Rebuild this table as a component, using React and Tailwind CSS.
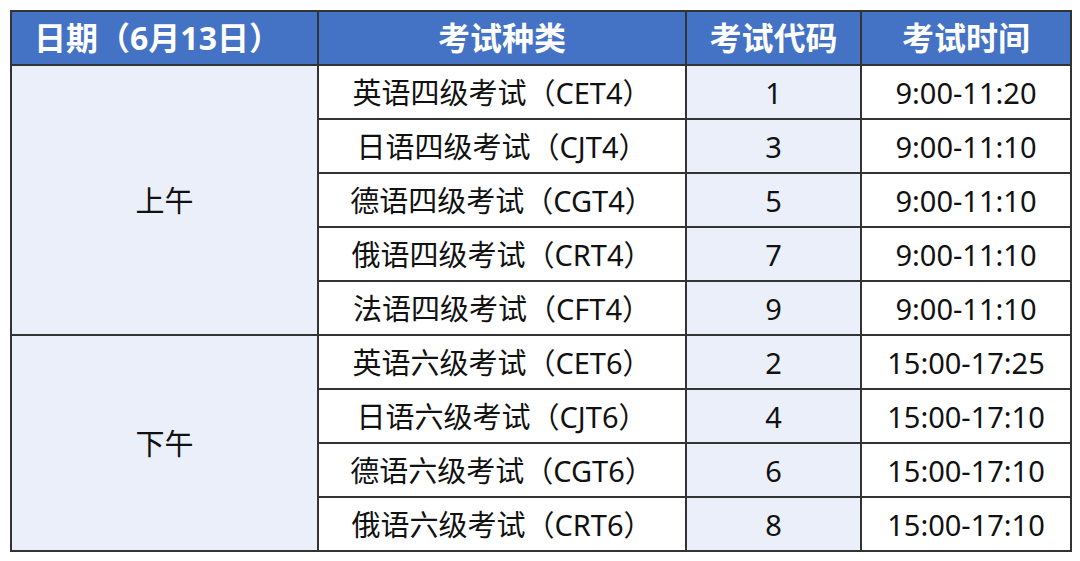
import React from "react";

const rows = [
  ["英语四级考试（CET4）", "1", "9:00-11:20"],
  ["日语四级考试（CJT4）", "3", "9:00-11:10"],
  ["德语四级考试（CGT4）", "5", "9:00-11:10"],
  ["俄语四级考试（CRT4）", "7", "9:00-11:10"],
  ["法语四级考试（CFT4）", "9", "9:00-11:10"],
  ["英语六级考试（CET6）", "2", "15:00-17:25"],
  ["日语六级考试（CJT6）", "4", "15:00-17:10"],
  ["德语六级考试（CGT6）", "6", "15:00-17:10"],
  ["俄语六级考试（CRT6）", "8", "15:00-17:10"],
];

const font = { fontFamily: '"Noto Sans", "Noto Sans CJK SC", sans-serif' };

export default function App() {
  return (
    <div className="w-[1080px] h-[561px] bg-white pt-[10px] pl-[10px]" style={font}>
      <table className="border-collapse table-fixed border-2 border-[#5a5a5a] text-[#111] text-[29px] leading-none">
        <colgroup>
          <col className="w-[307px]" />
          <col className="w-[368px]" />
          <col className="w-[175px]" />
          <col className="w-[210px]" />
        </colgroup>
        <thead>
          <tr className="h-[54px] bg-[#4472C4] text-white font-bold text-[32px]">
            <th className="border-2 border-[#333] font-bold pr-[14px]">日期（6月13日）</th>
            <th className="border-2 border-[#333] font-bold">考试种类</th>
            <th className="border-2 border-[#333] font-bold">考试代码</th>
            <th className="border-2 border-[#333] font-bold">考试时间</th>
          </tr>
        </thead>
        <tbody>
          {rows.map((r, i) => (
            <tr key={i} className="h-[54px]">
              {i === 0 && (
                <td rowSpan={5} className="border-2 border-[#333] bg-[#EAEFF9] text-center">
                  上午
                </td>
              )}
              {i === 5 && (
                <td rowSpan={4} className="border-2 border-[#333] bg-[#EAEFF9] text-center">
                  下午
                </td>
              )}
              <td className="border-2 border-[#333] text-center">{r[0]}</td>
              <td className="border-2 border-[#333] bg-[#EAEFF9] text-center">{r[1]}</td>
              <td className="border-2 border-[#333] text-center">{r[2]}</td>
            </tr>
          ))}
        </tbody>
      </table>
    </div>
  );
}
